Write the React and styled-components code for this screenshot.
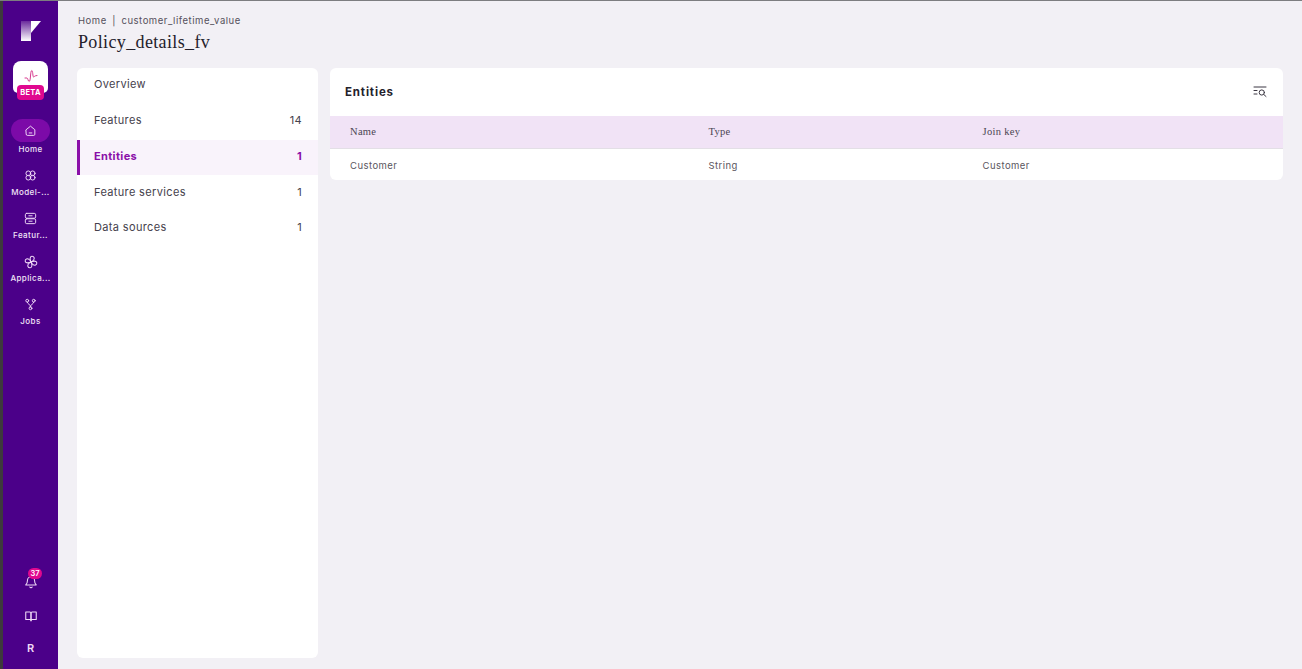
import React from "react";
import styled, { createGlobalStyle } from "styled-components";

const Global = createGlobalStyle`
  html, body { margin: 0; padding: 0; height: 100%; background: #f2f0f5; overflow: hidden; }
  #root { height: 100%; }
  * { box-sizing: border-box; }
`;
const Page = styled.div`
  height: 669px; display: flex; border-top: 1px solid #7d7d80;
  font-family: Inter, "Liberation Sans", sans-serif; background: #f2f0f5;
`;
const Rail = styled.nav`
  width: 58px; flex: none; display: flex; flex-direction: column; align-items: center;
  background: #4b0089; border-left: 3px solid #3d3a3c; padding-top: 18px;
`;
const Logo = styled.svg`width: 20px; height: 22px; display: block; margin-bottom: 20px;`;
const AppTile = styled.div`
  position: relative; width: 35px; height: 32px; border-radius: 8px 8px 5px 5px; background: #fff;
  display: flex; justify-content: center; padding-top: 8px; margin-bottom: 26px;
`;
const Beta = styled.span`
  position: absolute; left: 4px; bottom: -7px; width: 27px; height: 15px; border-radius: 4px;
  background: #e0088f; color: #fff; font-size: 7.5px; font-weight: 700; line-height: 15px; text-align: center;
  letter-spacing: .3px;
`;
const NavItem = styled.div`
  display: flex; flex-direction: column; align-items: center; width: 55px; height: 43px;
`;
const NavIcon = styled.div`
  width: 39px; height: 23px; border-radius: 12px; display: flex; align-items: center; justify-content: center;
  padding-top: ${p => (p.$active ? 0 : 4)}px;
  background: ${p => (p.$active ? "#7c0aa8" : "transparent")}; color: #f0d9f7;
`;
const NavLabel = styled.div`
  color: #f1e4f7; font-size: 8px; font-weight: 500; line-height: 10px; margin-top: 2px; letter-spacing: .4px;
  width: 42px; white-space: nowrap; text-align: center;
`;
const Spacer = styled.div`flex: 1;`;
const BottomIcon = styled.div`
  position: relative; height: 32px; width: 100%; display: flex; align-items: center; justify-content: center;
  color: #f0d9f7; font-size: 11px; font-weight: 600; padding-bottom: ${p => p.$lift || 0}px;
`;
const Badge = styled.span`
  position: absolute; left: 25px; top: 0; min-width: 14px; height: 11px; border-radius: 6px; background: #e0088f;
  color: #fff; font-size: 7.5px; font-weight: 600; line-height: 11px; text-align: center;
`;
const TailGap = styled.div`height: 5px; flex: none;`;
const Main = styled.main`
  flex: 1; min-width: 0; padding: 14px 19px 10px 20px; display: flex; flex-direction: column;
`;
const Crumbs = styled.div`
  font-size: 9.5px; line-height: 12px; color: #55505c; letter-spacing: .53px; display: flex; gap: 5.5px;
`;
const Title = styled.h1`
  margin: 3px 0 14px -1px; padding-left: 1px; font: 400 18px/24px "Liberation Serif", "DejaVu Serif", serif; color: #24212b; letter-spacing: .36px;
`;
const Columns = styled.div`flex: 1; min-height: 0; display: flex; gap: 12px; align-items: flex-start; margin-left: -1px;`;
const SideCard = styled.aside`
  width: 241px; height: 590px; flex: none; background: #fff; border-radius: 6px;
`;
const SideRow = styled.div`
  height: 35.75px; padding: 0 16px 3px ${p => (p.$active ? 14 : 17)}px;
  display: flex; align-items: center; justify-content: space-between;
  font-size: 11px; letter-spacing: .35px; color: ${p => (p.$active ? "#8a0fa8" : "#45414c")};
  font-weight: ${p => (p.$active ? 700 : 400)};
  background: ${p => (p.$active ? "#f9f3fb" : "transparent")};
  border-left: ${p => (p.$active ? "3px solid #8a0fa8" : "none")};
`;
const Panel = styled.section`
  flex: 1; min-width: 0; background: #fff; border-radius: 6px; overflow: hidden;
`;
const PanelHead = styled.header`
  height: 48px; display: flex; align-items: center; justify-content: space-between; padding: 0 16px 0 15px;
`;
const PanelTitle = styled.h2`
  margin: 0; font-size: 11.5px; font-weight: 700; color: #24212b; letter-spacing: .85px;
`;
const Row = styled.div`
  display: grid; grid-template-columns: 358.5px 274px 1fr; align-items: center; padding-left: 20px;
`;
const HeadRow = styled(Row)`
  height: 33px; background: #f1e3f6; border-bottom: 1px solid #e3dfe6; padding-bottom: 1px;
  font: 400 10.5px/12px "Liberation Serif", "DejaVu Serif", serif; color: #4b4552; letter-spacing: .3px;
`;
const BodyRow = styled(Row)`
  height: 31px; padding-top: 1px; font-size: 9.5px; color: #5a5660; letter-spacing: .45px;
`;

const IconSvg = styled.svg`width: ${p => p.$s || 13}px; height: ${p => p.$s || 13}px; display: block;`;
const Stroke = ({ children, s }) => (
  <IconSvg $s={s} viewBox="0 0 24 24" fill="none" stroke="currentColor" strokeWidth="1.8" strokeLinecap="round" strokeLinejoin="round">{children}</IconSvg>
);
const blade = "M12 12 C10 8 9.5 2.5 13.5 2 C17.5 1.8 18.5 6 16.5 8.5 C15.5 10 14 11.5 12 12 Z";

export default function App() {
  return (
    <Page>
      <Global />
      <Rail>
        <Logo viewBox="0 0 20 22">
          <defs>
            <linearGradient id="lg" x1="0" y1="0" x2="0" y2="1">
              <stop offset="0" stopColor="#6a2a9c" />
              <stop offset="1" stopColor="#fff" />
            </linearGradient>
          </defs>
          <rect x="0" y="2" width="10" height="20" fill="url(#lg)" />
          <path d="M10 2 H20 L10 14 Z" fill="#fff" />
        </Logo>
        <AppTile>
          <IconSvg $s={14} viewBox="0 0 14 14" fill="none" stroke="#d83a8e" strokeWidth="1" strokeLinecap="round">
            <path d="M1 9 H3 C4 9 4 12.5 5.2 12.5 C6.8 12.5 6.2 1.5 7.8 1.5 C9 1.5 8.6 8 9.6 8 C10.4 8 10.4 6.5 13 6.5" />
          </IconSvg>
          <Beta>BETA</Beta>
        </AppTile>
        <NavItem>
          <NavIcon $active>
            <Stroke><path d="M4 10.5 12 4l8 6.5V19a2 2 0 0 1-2 2H6a2 2 0 0 1-2-2z" /><path d="M9.5 16.5h5" /></Stroke>
          </NavIcon>
          <NavLabel>Home</NavLabel>
        </NavItem>
        <NavItem>
          <NavIcon>
            <Stroke><circle cx="8" cy="8" r="4.4" /><circle cx="16" cy="8" r="4.4" /><circle cx="8" cy="16" r="4.4" /><circle cx="16" cy="16" r="4.4" /></Stroke>
          </NavIcon>
          <NavLabel>Model-...</NavLabel>
        </NavItem>
        <NavItem>
          <NavIcon>
            <Stroke><rect x="2.5" y="2.5" width="19" height="9" rx="2.5" /><rect x="2.5" y="12.5" width="19" height="9" rx="2.5" /><path d="M9 7h6M9 17h6" /></Stroke>
          </NavIcon>
          <NavLabel>Featur...</NavLabel>
        </NavItem>
        <NavItem>
          <NavIcon>
            <Stroke s={14}>
              <path d={blade} />
              <path d={blade} transform="rotate(90 12 12)" />
              <path d={blade} transform="rotate(180 12 12)" />
              <path d={blade} transform="rotate(270 12 12)" />
            </Stroke>
          </NavIcon>
          <NavLabel>Applica...</NavLabel>
        </NavItem>
        <NavItem>
          <NavIcon>
            <Stroke><circle cx="6" cy="5" r="2.6" /><circle cx="18" cy="5" r="2.6" /><circle cx="12" cy="19" r="2.6" /><path d="M6 7.6c0 4 6 3 6 8.8M18 7.6c0 4-6 3-6 8.8" /></Stroke>
          </NavIcon>
          <NavLabel>Jobs</NavLabel>
        </NavItem>
        <Spacer />
        <BottomIcon $lift={4}>
          <Stroke s={14}><path d="M6 9a6 6 0 0 1 12 0c0 5 2 7 3 8H3c1-1 3-3 3-8Z" /><path d="M10 20.5a2.2 2.2 0 0 0 4 0" /></Stroke>
          <Badge>37</Badge>
        </BottomIcon>
        <BottomIcon>
          <Stroke s={14}><path d="M3 5h7a2 2 0 0 1 2 2v13a2 2 0 0 0-2-2H3z" /><path d="M21 5h-7a2 2 0 0 0-2 2v13a2 2 0 0 1 2-2h7z" /></Stroke>
        </BottomIcon>
        <BottomIcon>R</BottomIcon>
        <TailGap />
      </Rail>
      <Main>
        <Crumbs><span>Home</span><span>|</span><span>customer_lifetime_value</span></Crumbs>
        <Title>Policy_details_fv</Title>
        <Columns>
          <SideCard>
            <SideRow><span>Overview</span></SideRow>
            <SideRow><span>Features</span><span>14</span></SideRow>
            <SideRow $active><span>Entities</span><span>1</span></SideRow>
            <SideRow><span>Feature services</span><span>1</span></SideRow>
            <SideRow><span>Data sources</span><span>1</span></SideRow>
          </SideCard>
          <Panel>
            <PanelHead>
              <PanelTitle>Entities</PanelTitle>
              <IconSvg $s={14} viewBox="0 0 14 14" fill="none" stroke="#3b3742" strokeWidth="1" strokeLinecap="round">
                <path d="M1 2h12M1 5.5h3M1 9h3" />
                <circle cx="8.8" cy="7.5" r="2.6" />
                <path d="M10.8 9.5 13 11.5" />
              </IconSvg>
            </PanelHead>
            <HeadRow><span>Name</span><span>Type</span><span>Join key</span></HeadRow>
            <BodyRow><span>Customer</span><span>String</span><span>Customer</span></BodyRow>
          </Panel>
        </Columns>
      </Main>
    </Page>
  );
}
